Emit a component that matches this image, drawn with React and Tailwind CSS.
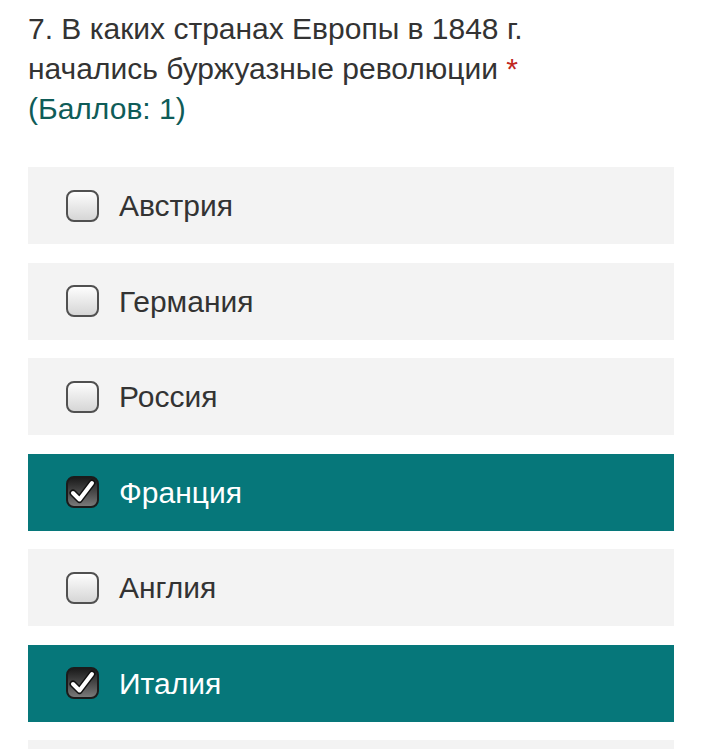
const options = [
  { label: 'Австрия', checked: false },
  { label: 'Германия', checked: false },
  { label: 'Россия', checked: false },
  { label: 'Франция', checked: true },
  { label: 'Англия', checked: false },
  { label: 'Италия', checked: true },
]

function Box({ checked }) {
  if (checked) {
    return (
      <span className="relative flex h-[32px] w-[33px] shrink-0 items-center justify-center rounded-[8px] border-2 border-[#1b1b1b] bg-gradient-to-b from-[#1c1c1c] to-[#7a7a7a]">
        <svg width="28" height="26" viewBox="0 0 28 26">
          <path d="M4 14 L10.5 20.5 L23 4" fill="none" stroke="#111" strokeWidth="7" strokeLinecap="round" strokeLinejoin="round" />
          <path d="M4 14 L10.5 20.5 L23 4" fill="none" stroke="#fff" strokeWidth="4" strokeLinecap="round" strokeLinejoin="round" />
        </svg>
      </span>
    )
  }
  return (
    <span className="h-[32px] w-[33px] shrink-0 rounded-[8px] border-2 border-[#505050] bg-gradient-to-b from-[#fdfdfd] to-[#d6d6d6]" />
  )
}

export default function App() {
  return (
    <div className="h-[749px] w-[702px] overflow-hidden bg-white font-['Liberation_Sans',Arial,sans-serif]">
      <div className="px-[28px] pt-[9px] text-[30px] leading-[40px] text-[#333]">
        <div>7. В каких странах Европы в 1848 г.</div>
        <div>
          начались буржуазные революции <span className="text-[#c0281e]">*</span>
        </div>
        <div className="text-[#0f5c58]">(Баллов: 1)</div>
      </div>

      <div className="mt-[38px] flex flex-col gap-[18.5px] px-[28px]">
        {options.map((o) => (
          <label
            key={o.label}
            className={
              'flex h-[77px] items-center pl-[38px] text-[30px] ' +
              (o.checked ? 'bg-[#06777a] text-white' : 'bg-[#f3f3f3] text-[#333]')
            }
          >
            <Box checked={o.checked} />
            <span className="ml-[20px]">{o.label}</span>
          </label>
        ))}
        <div className="h-[77px] bg-[#f3f3f3]" />
      </div>
    </div>
  )
}
